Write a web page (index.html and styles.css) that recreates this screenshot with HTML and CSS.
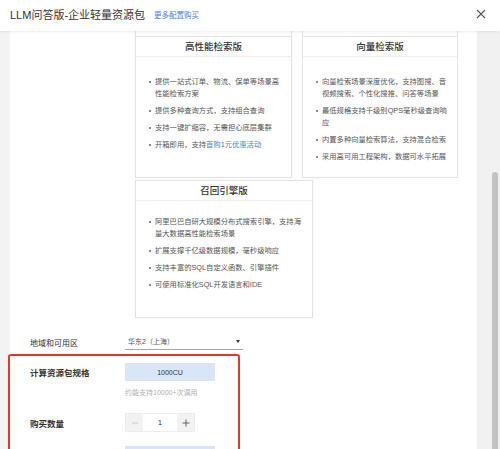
FILE: index.html
```html
<!DOCTYPE html>
<html lang="zh-CN">
<head>
<meta charset="utf-8">
<title>LLM问答版-企业轻量资源包</title>
<link rel="stylesheet" href="styles.css">
</head>
<body>
<div class="drawer">
  <header class="hd">
    <span class="hd-title">LLM问答版-企业轻量资源包</span>
    <a class="hd-link">更多配置购买</a>
    <svg class="hd-close" viewBox="0 0 10 10" width="10" height="10"><path d="M1 1L9 9M9 1L1 9" stroke="#555" stroke-width="1.1" fill="none"/></svg>
  </header>
  <div class="main">
    <div class="gutter"></div>
    <div class="content">
      <div class="cards">
        <div class="card card-top card-left">
          <div class="cap"></div>
          <div class="card-title">高性能检索版</div>
          <div class="card-body">
            <ul class="feat">
              <li>提供一站式订单、物流、保单等场景高性能检索方案</li>
              <li>提供多种查询方式，支持组合查询</li>
              <li>支持一键扩缩容，无需担心底层集群</li>
              <li>开箱即用，支持<span class="blue">首购1元优惠活动</span></li>
            </ul>
          </div>
        </div>
        <div class="card card-top card-right">
          <div class="cap"></div>
          <div class="card-title">向量检索版</div>
          <div class="card-body">
            <ul class="feat">
              <li>向量检索场景深度优化，支持图搜、音视频搜索、个性化搜推、问答等场景</li>
              <li>最低规格支持千级别QPS毫秒级查询响应</li>
              <li>内置多种向量检索算法，支持混合检索</li>
              <li>采用高可用工程架构，数据可水平拓展</li>
            </ul>
          </div>
        </div>
        <div class="card card-wide">
          <div class="card-title">召回引擎版</div>
          <div class="card-body card-body-wide">
            <ul class="feat">
              <li>阿里巴巴自研大规模分布式搜索引擎，支持海量大数据高性能检索场景</li>
              <li>扩展支撑千亿级数据规模，毫秒级响应</li>
              <li>支持丰富的SQL自定义函数、引擎插件</li>
              <li>可使用标准化SQL开发语言和IDE</li>
            </ul>
          </div>
        </div>
      </div>

      <div class="form">
        <div class="row row-region">
          <div class="label label-plain">地域和可用区</div>
          <div class="select">
            <span class="select-text">华东2（上海）</span>
            <span class="caret"></span>
          </div>
        </div>
        <div class="mark">
          <div class="row row-spec">
            <div class="label">计算资源包规格</div>
            <div class="opt">1000CU</div>
          </div>
          <div class="hint">约能支持10000+次调用</div>
          <div class="row row-qty">
            <div class="label">购买数量</div>
            <div class="num">
              <span class="num-btn"><svg viewBox="0 0 8 8" width="8" height="8"><path d="M1 4H7" stroke="#c4c4c4" stroke-width="0.9"/></svg></span>
              <span class="num-val">1</span>
              <span class="num-btn"><svg viewBox="0 0 8 8" width="8" height="8"><path d="M0.5 4H7.5M4 0.5V7.5" stroke="#555" stroke-width="0.9"/></svg></span>
            </div>
          </div>
          <div class="row row-time">
            <div class="label">购买时长</div>
            <div class="opt">1年</div>
          </div>
        </div>
      </div>
    </div>
    <div class="track"><div class="thumb"></div></div>
  </div>
</div>
</body>
</html>
```

FILE: styles.css
```css
* { box-sizing: border-box; }
html, body { margin: 0; padding: 0; }
body {
  width: 500px;
  height: 449px;
  overflow: hidden;
  background: #fff;
  font-family: "Liberation Sans", "Noto Sans CJK SC", sans-serif;
  color: #333;
}
.drawer { display: flex; flex-direction: column; height: 449px; }

.hd {
  height: 31px;
  flex: none;
  display: flex;
  align-items: center;
  padding: 0 14px 3px 10px;
  background: #fff;
  box-shadow: 0 1px 3px rgba(0, 0, 0, 0.08);
  position: relative;
  z-index: 2;
}
.hd-title { font-size: 11px; color: #333; white-space: nowrap; }
.hd-link { font-size: 7.5px; color: #3f84d8; margin-left: 9px; white-space: nowrap; }
.hd-close { margin-left: auto; display: block; }

.main { flex: 1; display: flex; min-height: 0; }
.gutter { width: 10px; flex: none; background: #f2f3f5; }
.content { flex: 1; min-width: 0; background: #fff; }
.track {
  width: 23px;
  flex: none;
  background: #f1f1f2;
  padding: 141px 2px 0 15px;
  overflow: hidden;
}
.thumb { width: 6px; height: 400px; background: #c2c2c2; border-radius: 3px 3px 0 0; }

/* cards */
.cards {
  display: flex;
  flex-wrap: wrap;
  column-gap: 10px;
  row-gap: 2px;
  padding-left: 125px;
  margin-top: -10px;
}
.card {
  border: 1px solid #e3e3e3;
  background: #fff;
  display: flex;
  flex-direction: column;
  box-shadow: 0 0 2px rgba(0, 0, 0, 0.03);
}
.card-top { height: 157px; }
.card-left { width: 157px; }
.card-right { width: 156px; }
.card-wide { width: 178px; height: 138px; }
.cap { height: 15px; flex: none; border-bottom: 1px solid #dfe4ea; }
.card-title {
  height: 20px;
  flex: none;
  border-bottom: 1px solid #ececec;
  font-size: 9.5px;
  line-height: 19px;
  text-align: center;
  color: #333;
  font-weight: 500;
}
.card-body { flex: 1; padding: 19px 10px 0 13px; }
.card-body-wide { padding: 15px 8px 0 13px; }
.feat { list-style: none; margin: 0; padding: 0; }
.feat li {
  position: relative;
  padding-left: 6px;
  margin-bottom: 5px;
  font-size: 7.3px;
  line-height: 12px;
  color: #555;
}
.feat li::before {
  content: "";
  position: absolute;
  left: 0;
  top: 5px;
  width: 2px;
  height: 2px;
  border-radius: 50%;
  background: #666;
}
.blue { color: #3d86d8; }

/* form */
.form { margin-top: 14px; }
.row { display: flex; align-items: center; padding-left: 20px; }
.label { width: 95px; flex: none; font-size: 8.5px; font-weight: bold; color: #333; white-space: nowrap; }
.label-plain { font-weight: normal; font-size: 8px; }
.row-region { height: 20px; }
.select {
  width: 118px;
  height: 16px;
  display: flex;
  align-items: center;
  padding: 0 3px 1px 3px;
  border-bottom: 1px solid #a6a6a6;
}
.select-text { font-size: 7px; color: #555; }
.caret {
  margin-left: auto;
  width: 0;
  height: 0;
  border-left: 2.5px solid transparent;
  border-right: 2.5px solid transparent;
  border-top: 3px solid #333;
}

.mark {
  margin-top: 2px;
  margin-left: -2px;
  width: 232px;
  height: 120px;
  border: 2px solid #e0392b;
  border-radius: 3px;
  padding-top: 7px;
}
.row-spec { height: 18px; }
.opt {
  width: 90px;
  height: 18px;
  background: #d9e6f7;
  font-size: 7px;
  color: #333;
  display: flex;
  align-items: center;
  justify-content: center;
}
.hint {
  margin: 7px 0 0 115px;
  font-size: 7px;
  line-height: 10px;
  color: #b0b0b0;
}
.row-qty { height: 19px; margin-top: 15px; }
.num {
  width: 70px;
  height: 19px;
  display: flex;
  border: 1px solid #ececec;
}
.num-btn {
  width: 17px;
  flex: none;
  background: #f2f2f2;
  display: flex;
  align-items: center;
  justify-content: center;
}
.num-btn svg { display: block; }
.num-val {
  flex: 1;
  background: #fff;
  font-size: 7px;
  color: #333;
  display: flex;
  align-items: center;
  justify-content: center;
}
.row-time { height: 18px; margin-top: 14px; }
```
